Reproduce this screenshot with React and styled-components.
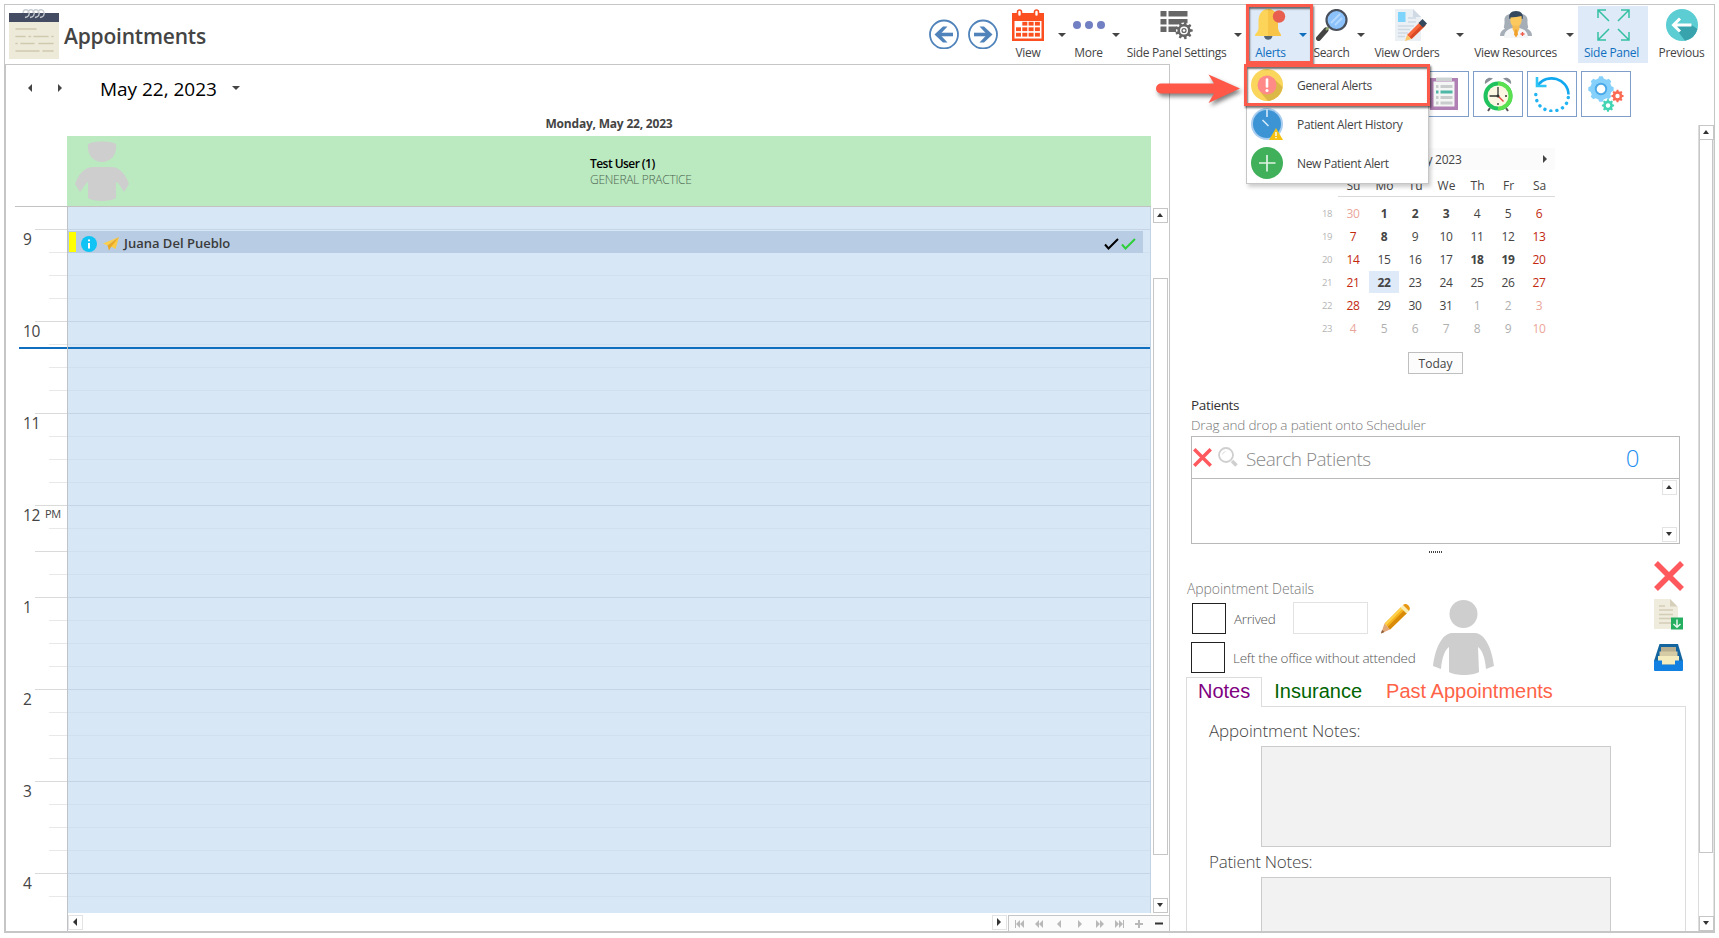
import React from "react";
import styled, { createGlobalStyle } from "styled-components";

const GlobalStyle = createGlobalStyle`
  * {
    box-sizing: border-box;
  }
  body {
    margin: 0;
    background: #fff;
    color: #444;
    font-family: "Open Sans", "Noto Sans", sans-serif;
    font-size: 12px;
    overflow: hidden;
  }
  svg {
    display: block;
    flex: none;
  }
`;

const Window = styled.div`
  position: relative;
  width: 1711px;
  height: 929px;
  margin: 4px;
  border: 1px solid #c6c6c6;
  border-bottom-width: 2px;
  display: flex;
  flex-direction: column;
`;

/* ---------- header ---------- */

const Header = styled.div`
  height: 59px;
  flex: none;
  display: flex;
`;
const Title = styled.h1`
  margin: 0 auto 0 5px;
  font-size: 21px;
  font-weight: 600;
  line-height: 62px;
  letter-spacing: -0.2px;
`;
const TitleIcon = styled.div`
  padding: 4px 0 0 4px;
`;
const NavArrows = styled.div`
  display: flex;
  gap: 9px;
  padding: 14px 6px 0 0;
`;
const ToolButton = styled.div`
  width: ${(p) => p.$w}px;
  margin: 0 ${(p) => p.$mr || 0}px 0 ${(p) => p.$ml || 0}px;
  height: ${(p) => (p.$on ? 57 : 59)}px;
  margin-top: ${(p) => (p.$on ? 1 : 0)}px;
  padding-top: ${(p) => (p.$on ? 3 : 4)}px;
  display: flex;
  flex-direction: column;
  align-items: center;
  gap: 4px;
  background: ${(p) => (p.$on ? "#deeaf8" : "transparent")};
  color: ${(p) => (p.$on ? "#106ebe" : "#444")};
  span {
    padding-right: ${(p) => p.$nudge || 0}px;
    line-height: 16px;
    white-space: nowrap;
    letter-spacing: -0.3px;
  }
`;
const IconShift = styled.div`
  padding-left: ${(p) => p.$x || 0}px;
  padding-top: ${(p) => p.$y || 0}px;
`;
const CaretCell = styled.div`
  width: ${(p) => p.$w || 19}px;
  height: ${(p) => (p.$on ? 57 : 59)}px;
  margin-top: ${(p) => (p.$on ? 1 : 0)}px;
  padding-top: ${(p) => (p.$on ? 27 : 28)}px;
  display: flex;
  justify-content: center;
  background: ${(p) => (p.$on ? "#deeaf8" : "transparent")};
  color: ${(p) => (p.$on ? "#106ebe" : "#444")};
`;
const Triangle = styled.i`
  width: 0;
  height: 0;
  flex: none;
  border: 4px solid transparent;
  ${(p) => p.$narrow && "border-left-width: 3.5px; border-right-width: 3.5px;"}
  ${(p) => ({
    up: "border-top: 0; border-bottom-color: currentColor;",
    down: "border-bottom: 0; border-top-color: currentColor;",
    left: "border-left: 0; border-right-color: currentColor;",
    right: "border-right: 0; border-left-color: currentColor;",
  })[p.$dir]}
`;

/* ---------- scheduler ---------- */

const Main = styled.div`
  flex: 1;
  min-height: 0;
  display: flex;
`;
const Scheduler = styled.div`
  width: 1165px;
  border: 1px solid #c6c6c6;
  border-bottom: 0;
  display: flex;
  flex-direction: column;
`;
const DateBar = styled.div`
  height: 46px;
  flex: none;
  display: flex;
  align-items: center;
  padding: 0 0 0 22px;
`;
const DateText = styled.div`
  margin: 2px 15px 0 38px;
  font-size: 19px;
  letter-spacing: -0.02px;
  color: #000;
`;
const ArrowGap = styled.div`
  width: 26px;
`;
const DayTitle = styled.div`
  height: 25px;
  flex: none;
  margin: 0 18px 0 61px;
  text-align: center;
  font-weight: 700;
  letter-spacing: -0.2px;
  line-height: 25px;
`;
const ResourceRow = styled.div`
  height: 71px;
  flex: none;
  margin: 0 18px 0 9px;
  padding-left: 52px;
  border-bottom: 1px solid #c2c2c2;
`;
const Resource = styled.div`
  height: 70px;
  background: #bbe9c0;
  display: flex;
  padding: 5px 0 0 8px;
`;
const ResourceText = styled.div`
  padding: 15px 0 0 461px;
  line-height: 16px;
  letter-spacing: -0.3px;
  color: #4d6650;
  font-weight: 300;
  b {
    display: block;
    font-weight: 600;
    letter-spacing: -0.55px;
    color: #000;
  }
`;
const Board = styled.div`
  flex: 1;
  min-height: 0;
  display: flex;
`;
const Ruler = styled.div`
  position: relative;
  width: 61px;
  overflow: hidden;
`;
const FirstSlot = styled.div`
  height: 22px;
`;
const HourMark = styled.div`
  height: 92px;
  border-top: 1px solid #dadada;
  margin-left: 29px;
  display: flex;
  flex-direction: column;
  align-items: flex-end;
`;
const QuarterMark = styled.div`
  width: ${(p) => (p.$long ? 32 : 18)}px;
  height: 1px;
  margin-bottom: 22px;
  background: ${(p) => (p.$long ? "#dadada" : "#e8e8e8")};
`;
const HourLabel = styled.div`
  width: 44px;
  height: 22px;
  flex: none;
  font-size: 15.5px;
  line-height: 19px;
  letter-spacing: -0.4px;
  display: flex;
  gap: 5px;
  sup {
    font-size: 11px;
    line-height: 16px;
    vertical-align: baseline;
  }
`;
const Slots = styled.div`
  position: relative;
  width: 1084px;
  height: 706px;
  border-left: 1px solid #bfc3c8;
  border-right: 1px solid #c3d3e6;
  background: #d7e7f6;
  overflow: hidden;
`;
const Slot = styled.div`
  height: 23px;
  border-top: 1px solid ${(p) => (p.$hour ? "#c5d5e7" : "#d0e0ef")};
`;
const Appointment = styled.div`
  position: absolute;
  top: 24px;
  left: 0;
  width: 1075px;
  height: 22px;
  background: #b8cce4;
  display: flex;
  align-items: center;
  padding: 0 7px 0 1px;
  font-size: 13px;
  font-weight: 600;
  color: #3b3b3b;
`;
const StatusIcons = styled.div`
  padding-top: 3px;
  display: flex;
  gap: 6px;
  margin: 0 auto 0 5px;
  &:last-child {
    gap: 2px;
    margin: 0;
  }
`;
const YellowBar = styled.div`
  width: 7px;
  height: 20px;
  background: #ff0;
`;
const PatientName = styled.span`
  padding-top: 2px;
  margin: -3px 0 0 -2px;
  line-height: 16px;
`;
const NowLine = styled.div`
  position: absolute;
  top: 140px;
  left: ${(p) => p.$left || 0}px;
  right: 0;
  height: 2px;
  background: #106ebe;
`;
const ScrollColumn = styled.div`
  width: 15px;
  margin: 1px 1px 0 2px;
  display: flex;
  flex-direction: column;
`;
const ScrollButton = styled.div`
  width: 15px;
  height: 15px;
  flex: none;
  padding: 0 1px 1px 0;
  border: 1px solid ${(p) => (p.$light ? "#e3e3e3" : "#c6c6c6")};
  background: #fff;
  color: #333;
  display: flex;
  align-items: center;
  justify-content: center;
`;
const Thumb = styled.div`
  height: ${(p) => p.$h}px;
  margin: ${(p) => p.$top}px 0 auto;
  border: 1px solid #c6c6c6;
`;
const BottomBar = styled.div`
  height: 18px;
  flex: none;
  margin-left: 61px;
  border-left: 1px solid #bfc3c8;
  display: flex;
  padding-top: 2px;
`;
const Navigator = styled.div`
  width: 161px;
  margin-left: auto;
  border: 1px solid #c6c6c6;
  border-width: 1px 0 0 1px;
  background: #fbfbfb;
`;
const RightButton = styled.div`
  margin-left: 909px;
`;

/* ---------- side panel ---------- */

const Side = styled.div`
  flex: 1;
  display: flex;
  flex-direction: column;
`;
const SideTools = styled.div`
  height: 61px;
  flex: none;
  display: flex;
  gap: 4px;
  padding: 7px 0 0 249px;
`;
const SideTool = styled.div`
  width: 50px;
  height: 46px;
  border: 1px solid #7f9fca;
  display: flex;
  align-items: center;
  justify-content: center;
`;
const SideBody = styled.div`
  flex: 1;
  min-height: 0;
  display: flex;
`;
const Content = styled.div`
  width: 528px;
  overflow: hidden;
`;
const SideScroll = styled.div`
  width: 16px;
  border-left: 1px solid #dcdcdc;
  border-right: 1px solid #e4e4e4;
  display: flex;
  flex-direction: column;
`;
const Calendar = styled.div`
  width: 241px;
  margin: 23px 0 0 144px;
`;
const MonthBar = styled.div`
  height: 22px;
  line-height: 22px;
  background: #fbfbfb;
  display: flex;
  align-items: center;
  justify-content: space-between;
  padding: 0 8px;
  letter-spacing: -0.25px;
  span {
    padding: 1px 0 0 2px;
  }
`;
const Weekdays = styled.div`
  height: 22px;
  margin: 5px 0 5px 24px;
  border-bottom: 1px solid #dadada;
  display: grid;
  grid-template-columns: repeat(7, 31px);
  text-align: center;
  line-height: 21px;
`;
const Week = styled.div`
  height: 23px;
  display: grid;
  grid-template-columns: 24px repeat(7, 31px);
  text-align: center;
`;
const WeekNumber = styled.span`
  padding-left: 2px;
  font-size: 9.5px;
  line-height: 23px;
  letter-spacing: -0.4px;
  color: #b5b5b5;
`;
const Day = styled.span`
  height: 22px;
  margin-right: 1px;
  line-height: 23px;
  letter-spacing: -0.4px;
  font-weight: ${(p) => (p.$bold ? 700 : 400)};
  color: ${(p) => (p.$weekend ? (p.$other ? "#eba69b" : "#c2290f") : p.$other ? "#b0b0b0" : "#444")};
  background: ${(p) => (p.$selected ? "#deeaf8" : "transparent")};
`;
const TodayButton = styled.div`
  width: 55px;
  height: 22px;
  margin: 12px 0 0 238px;
  border: 1px solid #bfbfbf;
  background: #fcfcfc;
  line-height: 22px;
  text-align: center;
`;
const Patients = styled.div`
  width: 489px;
  margin: 22px 0 0 21px;
`;
const PatientsTitle = styled.div`
  font-size: 13.5px;
  line-height: 18px;
  letter-spacing: -0.35px;
  color: #333;
`;
const PatientsHint = styled.div`
  margin: 2px 0 2px;
  font-size: 13.5px;
  font-weight: 300;
  line-height: 18px;
  letter-spacing: -0.18px;
  color: #777;
`;
const SearchBox = styled.div`
  height: 43px;
  border: 1px solid #b9b9b9;
  display: flex;
  align-items: center;
  padding: 0 40px 0 1px;
  font-size: 19px;
  font-weight: 300;
  letter-spacing: -0.5px;
  color: #888;
  svg {
    margin: 0 6px 1px 0;
  }
`;
const Placeholder = styled.span`
  margin: 0 auto 0 2px;
  padding-top: 2px;
`;
const Count = styled.span`
  font-size: 24px;
  color: #1e8ff0;
`;
const PatientList = styled.div`
  height: 65px;
  border: 1px solid #b9b9b9;
  border-top: 0;
  padding: 1px 2px 1px 0;
  display: flex;
  flex-direction: column;
  align-items: flex-end;
  justify-content: space-between;
`;
const Grip = styled.div`
  width: 14px;
  height: 2px;
  margin: 7px 0 0 259px;
  background: repeating-linear-gradient(90deg, #444 0 1px, #fff 1px 2px);
`;
const Details = styled.div`
  height: 124px;
  display: flex;
  padding-left: 16px;
`;
const DetailsForm = styled.div`
  width: 468px;
  color: #555;
  font-weight: 300;
`;
const DetailsTitle = styled.div`
  margin-top: 27px;
  padding-left: 1px;
  font-size: 14px;
  line-height: 18px;
  letter-spacing: -0.08px;
  color: #777;
`;
const DetailsRow = styled.div`
  display: flex;
`;
const Checks = styled.div`
  width: 247px;
  margin-top: 4px;
  display: flex;
  flex-direction: column;
  gap: 8px;
`;
const CheckLine = styled.div`
  height: ${(p) => p.$h}px;
  padding-left: ${(p) => p.$left}px;
  display: flex;
  align-items: center;
  font-size: 13.5px;
  letter-spacing: -0.25px;
  white-space: nowrap;
  span {
    padding-top: ${(p) => p.$drop || 0}px;
  }
`;
const Checkbox = styled.div`
  width: 34px;
  height: 31px;
  flex: none;
  margin-right: 8px;
  border: 1px solid #222;
`;
const TimeInput = styled.div`
  width: 75px;
  height: 32px;
  margin: 0 12px 0 17px;
  border: 1px solid #e2e2e2;
`;
const ActionColumn = styled.div`
  padding-top: 8px;
  display: flex;
  flex-direction: column;
  gap: 8px;
  svg:last-child {
    margin-top: 6px;
  }
`;
const Tabs = styled.div`
  height: 29px;
  margin-left: 16px;
  display: flex;
  font-family: "Liberation Sans", sans-serif;
  font-size: 20px;
`;
const Tab = styled.div`
  height: ${(p) => (p.$active ? 30 : 29)}px;
  padding: 0 12px 0 ${(p) => (p.$active ? 11 : 12)}px;
  padding-right: ${(p) => (p.$active ? 11 : 12)}px;
  line-height: 27px;
  border: 1px solid ${(p) => (p.$active ? "#dcdcdc" : "transparent")};
  border-width: ${(p) => (p.$active ? "1px 1px 0" : "1px 0 0")};
  background: ${(p) => (p.$active ? "#fff" : "transparent")};
  color: ${(p) => p.$color};
  z-index: 1;
`;
const TabPanel = styled.div`
  width: 500px;
  height: 300px;
  margin-left: 16px;
  padding-top: 12px;
  border: 1px solid #dcdcdc;
`;
const NoteLabel = styled.div`
  padding-left: 22px;
  font-size: 17px;
  font-weight: 300;
  line-height: 24px;
  letter-spacing: ${(p) => p.$ls}px;
`;
const NoteBox = styled.div`
  width: 350px;
  height: 101px;
  margin: 3px 0 3px 74px;
  border: 1px solid #cbcbcb;
  background: #f2f2f2;
`;

/* ---------- overlays ---------- */

const Menu = styled.div`
  position: absolute;
  top: 59px;
  left: 1241px;
  width: 183px;
  height: 120px;
  padding: 4px 0 0 4px;
  border: 1px solid #c6c6c6;
  background: #fff;
  box-shadow: 2px 3px 4px rgba(0, 0, 0, 0.2);
  display: flex;
  flex-direction: column;
  gap: 7px;
`;
const MenuItem = styled.div`
  height: 32px;
  display: flex;
  align-items: center;
  gap: 14px;
  letter-spacing: -0.33px;
  white-space: nowrap;
`;
const Highlight = styled.div`
  position: absolute;
  top: ${(p) => p.$top}px;
  left: ${(p) => p.$left}px;
  width: ${(p) => p.$w}px;
  height: ${(p) => p.$h}px;
  border: 3px solid #fc5a4b;
  box-shadow: 1px 2px 2px rgba(0, 0, 0, 0.55), inset 1px 2px 2px rgba(0, 0, 0, 0.55);
`;
const RedArrow = styled.svg`
  position: absolute;
  top: 66px;
  left: 1148px;
  filter: drop-shadow(2px 3px 2px rgba(0, 0, 0, 0.5));
`;

/* ---------- icons ---------- */

const NotepadIcon = () => (
  <svg width="50" height="50" viewBox="0 0 50 50">
    <path d="M0 13h50v37H0z" fill="#edeada" />
    <path d="M0 4h50v9H0z" fill="#434c62" />
    <g fill="none" stroke="#c9ced3" strokeWidth="1.3">
      {[17, 22, 27, 32].map((x) => (
        <path key={x} d={`M${x - 3} 4a3.5 3.5 0 0 1 3-3.500a4 4 0 0 1 1 7.500l-2 .5`} />
      ))}
    </g>
    <path d="M7 20h20M7 27.500h9M20 27.500h1.500M25 27.500h14M43 27.500h1M7 34.500h1M12 34.500h13M30 34.500h14M7 42h23M34 42h10" stroke="#cfc9ae" strokeWidth="1.600" strokeLinecap="round" />
  </svg>
);

const CircleArrow = ({ flip }) => (
  <svg width="30" height="30" viewBox="0 0 30 30" fill="none" transform={flip ? "scale(-1 1)" : undefined}>
    <circle cx="15" cy="15.500" r="14" stroke="#4f83b9" strokeWidth="1.8" />
    <path d="M8 15.500h16" stroke="#4f83b9" strokeWidth="3.600" />
    <path d="M5.500 15.500l8.500-8h4.500l-7.500 8 7.500 8H14z" fill="#4f83b9" />
  </svg>
);

const CalendarIcon = () => (
  <svg width="32" height="32" viewBox="0 0 32 32">
    <path d="M0 4h32v28H0z" fill="#fc4f20" />
    <path d="M2.500 12h27v17.500h-27z" fill="#fff" />
    <g fill="#fff" stroke="#fc4f20" strokeWidth="1.600">
      <rect x="5.500" y="1" width="4" height="6.500" rx="2" />
      <rect x="22.500" y="1" width="4" height="6.500" rx="2" />
    </g>
    <g fill="#fc4f20">
      {[0, 1, 2].map((r) =>
        [0, 1, 2, 3].map((c) =>
          r === 0 && c === 0 ? null : <rect key={`${r}${c}`} x={4 + c * 6.3} y={12.8 + r * 5.5} width="5" height="3.800" />
        )
      )}
    </g>
  </svg>
);

const DotsIcon = () => (
  <svg width="32" height="32" viewBox="0 0 32 32" fill="#7180c2">
    <circle cx="4" cy="16" r="4" />
    <circle cx="16" cy="16" r="4" />
    <circle cx="28" cy="16" r="4" />
  </svg>
);

const gearPath = (cx, cy, r, teeth, depth) => {
  const pts = [];
  for (let i = 0; i < teeth; i++) {
    [-0.32, -0.18, 0.18, 0.32].forEach((o, k) => {
      const a = ((i + o) / teeth) * Math.PI * 2;
      const rr = k === 0 || k === 3 ? r : r + depth;
      pts.push(`${(cx + Math.cos(a) * rr).toFixed(2)} ${(cy + Math.sin(a) * rr).toFixed(2)}`);
    });
  }
  return `M${pts.join("L")}Z`;
};

const SettingsListIcon = () => (
  <svg width="33" height="32" viewBox="0 0 33 32" fill="#666">
    <path d="M.5 2h6v5.500h-6zM8.500 2h19v5.500h-19zM.5 10h6v5.500h-6zM8.500 10h19v5.500h-19zM.5 17.500h6v5.500h-6zM8.500 17.500h12v5.500h-12z" />
    <circle cx="24" cy="21.500" r="8" fill="#fff" />
    <path d={gearPath(24, 21.5, 6.5, 9, 2.3)} />
    <circle cx="24" cy="21.500" r="4" fill="#fff" />
    <circle cx="24" cy="21.500" r="2.600" />
    <circle cx="24" cy="21.500" r="1.300" fill="#fff" />
  </svg>
);

const BellIcon = () => (
  <svg width="32" height="32" viewBox="0 0 32 32">
    <path d="M9 27h8.500a4.300 4.300 0 0 1-8.500 0z" fill="#546575" />
    <path d="M0 27c0-3 3.500-4 3.500-8V12C3.500 5 7 0 13 0s10 5 10 12v7c0 4 3 5 3 8z" fill="#fdd45a" />
    <path d="M13 0c6 0 10 5 10 12v7c0 4 3 5 3 8H13z" fill="#f8c447" />
    <circle cx="24" cy="7.500" r="6.200" fill="#e85f50" />
  </svg>
);

const MagnifierIcon = () => (
  <svg width="32" height="32" viewBox="0 0 32 32">
    <path d="M2.500 29.500L10 21" stroke="#444" strokeWidth="5" strokeLinecap="round" />
    <path d="M10 21l4-4" stroke="#91a86a" strokeWidth="2" />
    <circle cx="20.500" cy="11" r="10" fill="#8cc2fb" stroke="#49505c" strokeWidth="2.200" />
    <path d="M15 14l9-9M19 16l7-7" stroke="#b4d9ff" strokeWidth="1.800" />
  </svg>
);

const OrdersIcon = () => (
  <svg width="32" height="32" viewBox="0 0 32 32">
    <path d="M0 0h18l8 8v24H0z" fill="#ebf0f4" />
    <path d="M18 0l8 8h-8z" fill="#cfdae4" />
    <path d="M3 3h7.500v10H3z" fill="#7fd4fb" />
    <path d="M13 9h8M13 13h8M3 17h16M3 20.500h12M3 24h10M3 27.500h7" stroke="#cfd9e2" strokeWidth="1.300" />
    <path d="M12 26l14-14 4.500 4.500L16.500 30z" fill="#f8663a" />
    <path d="M14.500 28L28.500 14l2 2.500L16.500 30z" fill="#d94b26" />
    <path d="M12 26l4.500 4-6.500 2z" fill="#fdc56a" />
    <path d="M23.500 14l4-4 4.500 4.500-4 4z" fill="#34495e" />
  </svg>
);

const ResourcesIcon = () => (
  <svg width="32" height="32" viewBox="0 0 32 32">
    <g fill="#a5adb6">
      <path d="M13 6c-5-2-9 1-8.500 6 .3 4-1 5-.5 7 1 2 5 1 9 1zM19 6c5-2 9 1 8.500 6-.3 4 1 5 .5 7-1 2-5 1-9 1z" />
      <path d="M0 27c0-4 2-6.500 6-7.500h20c4 1 6 3.500 6 7.500z" />
    </g>
    <path d="M4 29c0-6 3-8.500 8.500-10h7c5.500 1.500 8.500 4 8.500 10z" fill="#f4f6f7" />
    <path d="M9.500 10C8 5 11 2 16 2s8 3 6.500 8z" fill="#34495e" />
    <path d="M10.500 8.500c3-.5 8-.5 11-1.500 1 7-1.500 11-5.500 11s-6.500-4-5.500-9.500z" fill="#fcc95f" />
    <path d="M12.500 16.500h7v3.500L16 27l-3.500-7z" fill="#f7bd55" />
    <path d="M15 20.500h2l1 5-2 3-2-3z" fill="#f1a22e" />
    <path d="M20.500 25h4M22.500 23v4" stroke="#f05a4a" strokeWidth="1.300" />
  </svg>
);

const ExpandIcon = () => (
  <svg width="33" height="32" viewBox="0 0 33 32" fill="none" stroke="#35c0a2" strokeWidth="1.500">
    <path d="M1 9V1h8M1 1l11 11M24 1h8v8M32 1L21 12M1 23v8h8M1 31l11-11M24 31h8v-8M32 31L21 20" />
  </svg>
);

const PreviousIcon = () => (
  <svg width="32" height="32" viewBox="0 0 32 32">
    <circle cx="16" cy="16" r="16" fill="#5bcdd3" />
    <path d="M25.500 16L31.500 20A16 16 0 0 1 19 31.700L8 17z" fill="#38a3ad" />
    <path d="M7 16h18.500M14 9.500L7.500 16l6.500 6.500" fill="none" stroke="#fff" strokeWidth="3" />
  </svg>
);

const GeneralAlertIcon = () => (
  <svg width="32" height="32" viewBox="0 0 32 32">
    <circle cx="16" cy="16" r="16" fill="#fad65c" />
    <path d="M22 9l9.500 9A16 16 0 0 1 17 32l-7-8z" fill="#dcb848" />
    <circle cx="16" cy="16" r="9.500" fill="#ff8a87" />
    <path d="M16 10.500v7" stroke="#fff" strokeWidth="2.600" strokeLinecap="round" />
    <circle cx="16" cy="21.500" r="1.500" fill="#fff" />
  </svg>
);

const HistoryIcon = () => (
  <svg width="32" height="32" viewBox="0 0 32 32">
    <circle cx="16" cy="16" r="16" fill="#a9cdf0" />
    <circle cx="16" cy="16" r="14" fill="#3c94d4" />
    <path d="M16 1v8" stroke="#d5e9f9" strokeWidth="1.600" />
    <path d="M11.500 12l6 6" stroke="#d5e9f9" strokeWidth="1.600" />
    <path d="M25 20l7 12H18z" fill="#f5c211" />
    <path d="M25 24v4M25 29v1.300" stroke="#fff" strokeWidth="1.400" />
  </svg>
);

const NewAlertIcon = () => (
  <svg width="32" height="32" viewBox="0 0 32 32">
    <circle cx="16" cy="16" r="16" fill="#41b05b" />
    <path d="M8 16h16.500M16 8v16.500" stroke="#dff3e3" strokeWidth="1.700" />
  </svg>
);

const ClipboardIcon = () => (
  <svg width="30" height="34" viewBox="0 0 30 34">
    <path d="M1 1h28v32H1z" fill="#b07fb3" />
    <path d="M4.500 4.500h21v25h-21z" fill="#f4f5f5" />
    <path d="M7 .5h16v3.500H7z" fill="#cdd3d3" />
    <path d="M7 9.500h2.500M11.500 9.500h12M7 20.500h2.500M11.500 20.500h12M7 26h2.500M11.500 26h12" stroke="#c9cccc" strokeWidth="2.800" />
    <path d="M7 15h2.500M11.500 15h12" stroke="#4fb7a5" strokeWidth="3" />
  </svg>
);

const ClockIcon = () => (
  <svg width="30" height="35" viewBox="0 0 30 35">
    <path d="M2 7c-1-4 3-8 8-5.500zM28 7c1-4-3-8-8-5.500z" fill="#8a8f98" />
    <path d="M7 31l-2 3M23 31l2 3" stroke="#555" strokeWidth="2" />
    <circle cx="15" cy="19" r="14.500" fill="#1fc25c" />
    <path d="M15 4.500a14.500 14.500 0 0 1 0 29z" fill="#5be04f" />
    <circle cx="15" cy="19" r="10.500" fill="#fdf6e3" />
    <path d="M15 10v9M6.500 19H15M15 26v2M22 19h2" stroke="#333" strokeWidth="1.300" />
    <path d="M15 19l5.500 5.500" stroke="#e2483d" strokeWidth="1.400" />
    <circle cx="15" cy="19" r="1.500" fill="#333" />
  </svg>
);

const RefreshIcon = () => (
  <svg width="36" height="36" viewBox="0 0 36 36" fill="none">
    <path d="M4 9C13-3 34 2 34.500 18.500" stroke="#12a8f0" strokeWidth="2.600" />
    <path d="M3 1v9h9.500" stroke="#2ec4f5" strokeWidth="2.600" />
    <path d="M1.800 18.500C2 40 33 40 34.300 21" stroke="#22b4f2" strokeWidth="3.400" strokeLinecap="round" strokeDasharray="0.1 6" />
  </svg>
);

const GearsIcon = () => (
  <svg width="36" height="36" viewBox="0 0 36 36">
    <path d={gearPath(13, 13, 10.8, 8, 2)} fill="#86d1fb" />
    <circle cx="13" cy="13" r="6.200" fill="#4ba8e8" />
    <circle cx="13" cy="13" r="4.300" fill="#fff" />
    <path d={gearPath(29.5, 20, 4.8, 8, 1.4)} fill="#fa6a55" />
    <circle cx="29.500" cy="20" r="2.200" fill="#fff" />
    <path d={gearPath(20, 29.5, 4.8, 8, 1.4)} fill="#43d4b4" />
    <circle cx="20" cy="29.500" r="2.200" fill="#fff" />
  </svg>
);

const StretchedAvatar = () => (
  <svg width="54" height="61" viewBox="0 0 54 61" fill="#cecece">
    <path d="M13 3C18-.5 36-.5 41 3c1 11-5 18-14 18S12 14 13 3z" />
    <path d="M0 43c4-11 10-17 19-17h17c8 0 14 6 18 17l-5 8c-3-5-6-10-8-10v16c-5 4-23 4-28 0V41c-2 1-5 6-8 10z" />
  </svg>
);

const Avatar = () => (
  <svg width="61" height="76" viewBox="0 0 61 76" fill="#cecece">
    <circle cx="30.500" cy="14" r="14" />
    <path d="M0 66C2 50 8 34 19 33h23c11 1 17 17 19 33l-8 3c-1-12-4-19-8-22l1 25c-6 4-24 4-30 0V47c-4 3-7 10-8 22z" />
  </svg>
);

const InfoIcon = () => (
  <svg width="16" height="16" viewBox="0 0 16 16">
    <circle cx="8" cy="8" r="8" fill="#0fc4f4" />
    <path d="M8 7v5.500M8 3.500v1.800" stroke="#fff" strokeWidth="2" />
  </svg>
);

const PlaneIcon = () => (
  <svg width="17" height="15" viewBox="0 0 17 15">
    <path d="M16 1L0 7.500l4.500 2z" fill="#fbd04f" />
    <path d="M16 1L7 10l5.500 3z" fill="#fbcb45" />
    <path d="M16 1L4.500 9.500l1.500 5L8 11z" fill="#eaa827" />
  </svg>
);

const CheckIcon = ({ color }) => (
  <svg width="15" height="12" viewBox="0 0 15 12" fill="none" stroke={color}>
    <path d="M1 6.500l3.500 4L14 1" strokeWidth="2" />
  </svg>
);

const CrossIcon = ({ size }) => (
  <svg width={size} height={size} viewBox="0 0 30 30" stroke="#ff595d" strokeWidth="5.500">
    <path d="M2 2l26 26M28 2L2 28" />
  </svg>
);

const GreySearchIcon = () => (
  <svg width="20" height="20" viewBox="0 0 20 20" fill="none">
    <circle cx="8" cy="8" r="7" stroke="#cfcfcf" strokeWidth="1.800" />
    <path d="M4.500 7.500a4 4 0 0 1 3-3" stroke="#ddd" />
    <path d="M14 14l4.500 4.500" stroke="#cfcfcf" strokeWidth="3.600" />
  </svg>
);

const PencilIcon = () => (
  <svg width="30" height="31" viewBox="0 0 30 31">
    <path d="M4.500 20.500L21 4l6 6L10 26.500z" fill="#f5b21c" />
    <path d="M7.500 24L24 7.500l3 2.500L10 26.500z" fill="#d98a08" />
    <path d="M5 20.500L21.500 4l1.500 1.500L6.500 22z" fill="#ffd24c" />
    <path d="M4.500 20.500l5.500 6L1 30.500z" fill="#e3a877" />
    <path d="M1 30.500l1-3.500 2.500 2z" fill="#8a5a3a" />
    <path d="M20.500 4.500L23 2l6 6-2.500 2.500z" fill="#f9ecb0" />
    <path d="M23 2c3-3.500 9 2 6 6z" fill="#e8960f" />
  </svg>
);

const DocIcon = () => (
  <svg width="30" height="31" viewBox="0 0 30 31">
    <path d="M0 0h16l8 8v22H0z" fill="#efebdd" />
    <path d="M16 0l7.500 7.500H16z" fill="#d6d0bb" />
    <path d="M5 7h6M5 11h14M5 15.500h14M5 19.500h12M5 24h12" stroke="#d3cdb6" strokeWidth="1.300" />
    <path d="M17 18.500h12V30.500H17z" fill="#24ae5f" />
    <path d="M23 20.500v7.500M19.500 25l3.500 3.300 3.500-3.300" stroke="#e8f8ee" strokeWidth="1.500" fill="none" />
  </svg>
);

const InboxIcon = () => (
  <svg width="29" height="27" viewBox="0 0 29 27">
    <path d="M5.500 0h18.500l5 17v8H0v-8z" fill="#12659f" />
    <path d="M7 3h15v5H7z" fill="#b7ae90" />
    <path d="M5.500 7.500h18v5h-18z" fill="#d5cba4" />
    <path d="M4 12h21v6H4z" fill="#f4ebbf" />
    <path d="M0 16.500h8v4h13v-4h8V26a1 1 0 0 1-1 1H1a1 1 0 0 1-1-1z" fill="#1180e0" />
    <path d="M8 16.500h13v4H8z" fill="#f4ebbf" />
  </svg>
);

const NavigatorGlyphs = () => (
  <svg width="160" height="16" viewBox="0 0 160 16" fill="#b8b8b8">
    <path d="M6 4h1v8H6zM11 4v8L7 8zM15 4v8l-4-4z" />
    <path d="M30 4v8l-4-4zM34 4v8l-4-4z" />
    <path d="M52 4v8l-4-4z" />
    <path d="M69 4v8l4-4z" />
    <path d="M87 4v8l4-4zM91 4v8l4-4z" />
    <path d="M106 4v8l4-4zM110 4v8l4-4zM114 4h1v8h-1z" />
    <path d="M129 4h2v3h3v2h-3v3h-2V9h-3V7h3z" />
    <path d="M146 6.500h8v2h-8z" fill="#333" />
  </svg>
);

/* ---------- data ---------- */

const hours = ["9", "10", "11", "12", "1", "2", "3", "4"];

const weeks = [
  [18, [30, 1, 2, 3, 4, 5, 6]],
  [19, [7, 8, 9, 10, 11, 12, 13]],
  [20, [14, 15, 16, 17, 18, 19, 20]],
  [21, [21, 22, 23, 24, 25, 26, 27]],
  [22, [28, 29, 30, 31, 1, 2, 3]],
  [23, [4, 5, 6, 7, 8, 9, 10]],
];
const busyDays = [1, 2, 3, 8, 18, 19, 22];

const isOtherMonth = (row, day) => (row === 0 && day > 20) || (row > 3 && day < 15);

const App = () => {
  return (
    <Window>
      <GlobalStyle />
      <Header>
        <TitleIcon>
          <NotepadIcon />
        </TitleIcon>
        <Title>Appointments</Title>
        <NavArrows>
          <CircleArrow />
          <CircleArrow flip />
        </NavArrows>
        <ToolButton $w={48}>
          <CalendarIcon />
          <span>View</span>
        </ToolButton>
        <CaretCell>
          <Triangle $dir="down" />
        </CaretCell>
        <ToolButton $w={35}>
          <DotsIcon />
          <span>More</span>
        </ToolButton>
        <CaretCell>
          <Triangle $dir="down" />
        </CaretCell>
        <ToolButton $w={103}>
          <SettingsListIcon />
          <span>Side Panel Settings</span>
        </ToolButton>
        <CaretCell>
          <Triangle $dir="down" />
        </CaretCell>
        <ToolButton $w={46} $ml={1} $nudge={1} $on>
          <BellIcon />
          <span>Alerts</span>
        </ToolButton>
        <CaretCell $w={18} $on>
          <Triangle $dir="down" />
        </CaretCell>
        <ToolButton $w={39}>
          <MagnifierIcon />
          <span>Search</span>
        </ToolButton>
        <CaretCell>
          <Triangle $dir="down" />
        </CaretCell>
        <ToolButton $w={74}>
          <IconShift $x={7}>
            <OrdersIcon />
          </IconShift>
          <span>View Orders</span>
        </ToolButton>
        <CaretCell $w={32}>
          <Triangle $dir="down" />
        </CaretCell>
        <ToolButton $w={79} $mr={7}>
          <ResourcesIcon />
          <span>View Resources</span>
        </ToolButton>
        <CaretCell $w={16}>
          <Triangle $dir="down" />
        </CaretCell>
        <ToolButton $w={70} $mr={1} $nudge={3} $on>
          <ExpandIcon />
          <span>Side Panel</span>
        </ToolButton>
        <ToolButton $w={65}>
          <PreviousIcon />
          <span>Previous</span>
        </ToolButton>
      </Header>

      <Main>
        <Scheduler>
          <DateBar>
            <Triangle $dir="left" />
            <ArrowGap />
            <Triangle $dir="right" />
            <DateText>May 22, 2023</DateText>
            <Triangle $dir="down" />
          </DateBar>
          <DayTitle>Monday, May 22, 2023</DayTitle>
          <ResourceRow>
            <Resource>
              <StretchedAvatar />
              <ResourceText>
                <b>Test User (1)</b>
                GENERAL PRACTICE
              </ResourceText>
            </Resource>
          </ResourceRow>
          <Board>
            <Ruler>
              <FirstSlot />
              {hours.map((h) => (
                <HourMark key={h}>
                  <HourLabel>
                    {h}
                    {h === "12" && <sup>PM</sup>}
                  </HourLabel>
                  <QuarterMark />
                  <QuarterMark $long={h === "12"} />
                  <QuarterMark />
                </HourMark>
              ))}
              <NowLine $left={13} />
            </Ruler>
            <Slots>
              <FirstSlot />
              {hours.map((h) =>
                [0, 15, 30, 45].map((m) => <Slot key={`${h}:${m}`} $hour={m === 0} />)
              )}
              <Appointment>
                <YellowBar />
                <StatusIcons>
                  <InfoIcon />
                  <PlaneIcon />
                  <PatientName>Juana Del Pueblo</PatientName>
                </StatusIcons>
                <StatusIcons>
                  <CheckIcon color="#000" />
                  <CheckIcon color="#2fcf3a" />
                </StatusIcons>
              </Appointment>
              <NowLine />
            </Slots>
            <ScrollColumn>
              <ScrollButton>
                <Triangle $dir="up" $narrow />
              </ScrollButton>
              <Thumb $top={55} $h={577} />
              <ScrollButton>
                <Triangle $dir="down" $narrow />
              </ScrollButton>
            </ScrollColumn>
          </Board>
          <BottomBar>
            <ScrollButton $light>
              <Triangle $dir="left" />
            </ScrollButton>
            <RightButton>
              <ScrollButton $light>
                <Triangle $dir="right" />
              </ScrollButton>
            </RightButton>
            <Navigator>
              <NavigatorGlyphs />
            </Navigator>
          </BottomBar>
        </Scheduler>

        <Side>
          <SideTools>
            <SideTool>
              <ClipboardIcon />
            </SideTool>
            <SideTool>
              <ClockIcon />
            </SideTool>
            <SideTool>
              <RefreshIcon />
            </SideTool>
            <SideTool>
              <GearsIcon />
            </SideTool>
          </SideTools>
          <SideBody>
            <Content>
              <Calendar>
                <MonthBar>
                  <Triangle $dir="left" />
                  <span>May 2023</span>
                  <Triangle $dir="right" />
                </MonthBar>
                <Weekdays>
                  {["Su", "Mo", "Tu", "We", "Th", "Fr", "Sa"].map((d) => (
                    <span key={d}>{d}</span>
                  ))}
                </Weekdays>
                {weeks.map(([num, days], row) => (
                  <Week key={num}>
                    <WeekNumber>{num}</WeekNumber>
                    {days.map((day, col) => {
                      const other = isOtherMonth(row, day);
                      return (
                        <Day
                          key={col}
                          $weekend={col === 0 || col === 6}
                          $other={other}
                          $bold={!other && busyDays.includes(day)}
                          $selected={!other && day === 22}
                        >
                          {day}
                        </Day>
                      );
                    })}
                  </Week>
                ))}
              </Calendar>
              <TodayButton>Today</TodayButton>

              <Patients>
                <PatientsTitle>Patients</PatientsTitle>
                <PatientsHint>Drag and drop a patient onto Scheduler</PatientsHint>
                <SearchBox>
                  <CrossIcon size={19} />
                  <GreySearchIcon />
                  <Placeholder>Search Patients</Placeholder>
                  <Count>0</Count>
                </SearchBox>
                <PatientList>
                  <ScrollButton $light>
                    <Triangle $dir="up" $narrow />
                  </ScrollButton>
                  <ScrollButton $light>
                    <Triangle $dir="down" $narrow />
                  </ScrollButton>
                </PatientList>
              </Patients>
              <Grip />

              <Details>
                <DetailsForm>
                  <DetailsTitle>Appointment Details</DetailsTitle>
                  <DetailsRow>
                    <Checks>
                      <CheckLine $h={32} $left={6} $drop={2}>
                        <Checkbox />
                        <span>Arrived</span>
                        <TimeInput />
                        <PencilIcon />
                      </CheckLine>
                      <CheckLine $h={31} $left={5}>
                        <Checkbox />
                        <span>Left the office without attended</span>
                      </CheckLine>
                    </Checks>
                    <IconShift $y={2}>
                      <Avatar />
                    </IconShift>
                  </DetailsRow>
                </DetailsForm>
                <ActionColumn>
                  <CrossIcon size={30} />
                  <DocIcon />
                  <InboxIcon />
                </ActionColumn>
              </Details>

              <Tabs>
                <Tab $active $color="#800080">Notes</Tab>
                <Tab $color="#006400">Insurance</Tab>
                <Tab $color="#ff6347">Past Appointments</Tab>
              </Tabs>
              <TabPanel>
                <NoteLabel $ls={-0.13}>Appointment Notes:</NoteLabel>
                <NoteBox />
                <NoteLabel $ls={-0.27}>Patient Notes:</NoteLabel>
                <NoteBox />
              </TabPanel>
            </Content>
            <SideScroll>
              <ScrollButton>
                <Triangle $dir="up" $narrow />
              </ScrollButton>
              <Thumb $top={-1} $h={714} />
              <ScrollButton>
                <Triangle $dir="down" $narrow />
              </ScrollButton>
            </SideScroll>
          </SideBody>
        </Side>
      </Main>

      <Menu>
        <MenuItem>
          <GeneralAlertIcon />
          <span>General Alerts</span>
        </MenuItem>
        <MenuItem>
          <HistoryIcon />
          <span>Patient Alert History</span>
        </MenuItem>
        <MenuItem>
          <NewAlertIcon />
          <span>New Patient Alert</span>
        </MenuItem>
      </Menu>
      <Highlight $top={-1} $left={1241} $w={67} $h={60} />
      <Highlight $top={59} $left={1239} $w={186} $h={42} />
      <RedArrow width="90" height="34" viewBox="0 0 90 34">
        <path d="M8 12.500h53L55.500 3.500 87 17.500 55.500 32l5.500-9.500H8a5 5 0 0 1 0-10z" fill="#ff5849" />
      </RedArrow>
    </Window>
  );
};

export default App;
